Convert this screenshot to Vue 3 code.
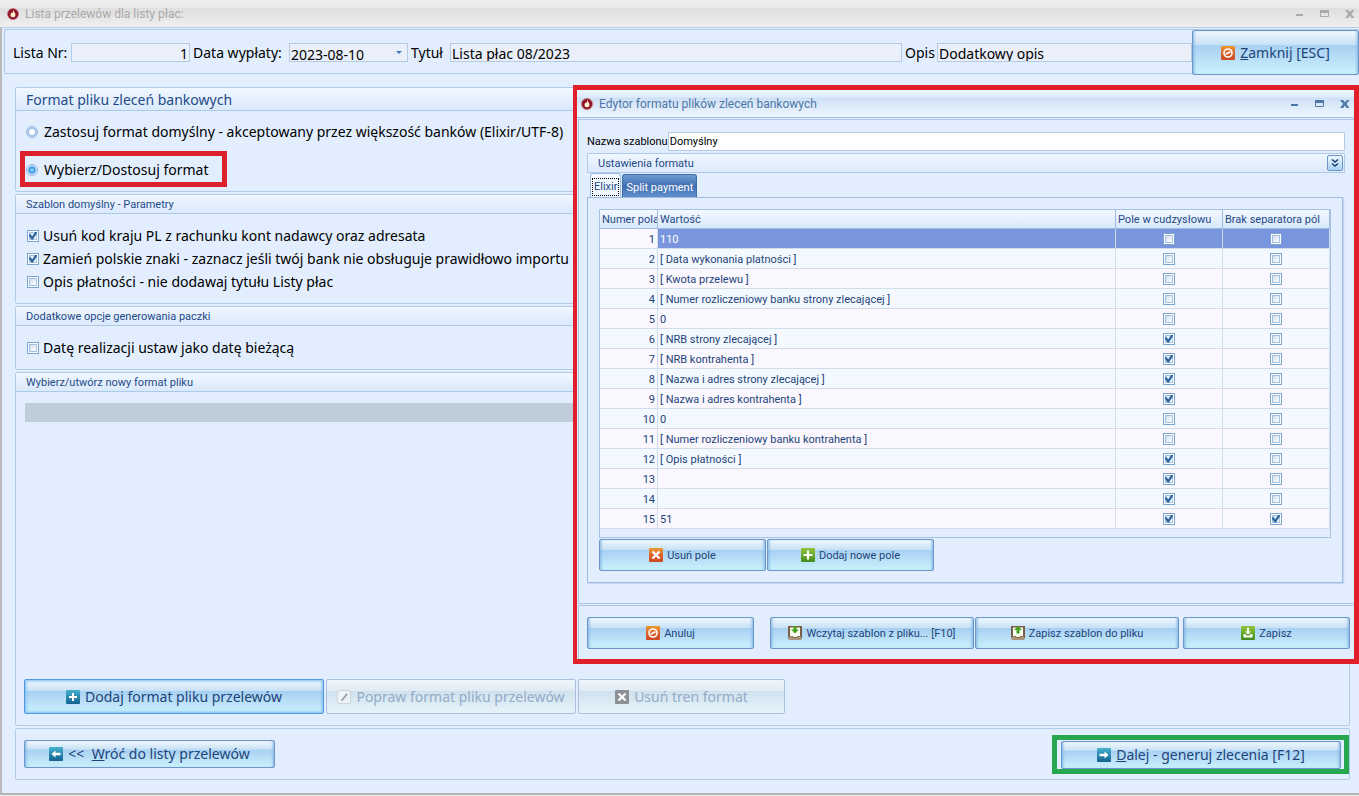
<script setup>
import { ref, reactive } from 'vue'

const rows = reactive([
  { value: '110', quoted: false, noSep: false },
  { value: '[ Data wykonania platności ]', quoted: false, noSep: false },
  { value: '[ Kwota przelewu ]', quoted: false, noSep: false },
  { value: '[ Numer rozliczeniowy banku strony zlecającej ]', quoted: false, noSep: false },
  { value: '0', quoted: false, noSep: false },
  { value: '[ NRB strony zlecającej ]', quoted: true, noSep: false },
  { value: '[ NRB kontrahenta ]', quoted: true, noSep: false },
  { value: '[ Nazwa i adres strony zlecającej ]', quoted: true, noSep: false },
  { value: '[ Nazwa i adres kontrahenta ]', quoted: true, noSep: false },
  { value: '0', quoted: false, noSep: false },
  { value: '[ Numer rozliczeniowy banku kontrahenta ]', quoted: false, noSep: false },
  { value: '[ Opis płatności ]', quoted: true, noSep: false },
  { value: '', quoted: true, noSep: false },
  { value: '', quoted: true, noSep: false },
  { value: '51', quoted: true, noSep: true },
])
const selected = ref(0)
const mode = ref('custom')
const stripCountry = ref(true)
const replaceChars = ref(true)
const skipTitle = ref(false)
const currentDate = ref(false)
const templateName = ref('Domyślny')
</script>

<template>
  <div class="window">
    <svg class="defs" aria-hidden="true">
      <defs>
        <linearGradient id="g-orange" x1="0" y1="0" x2="0" y2="1"><stop offset="0" stop-color="#eb9a2c" /><stop offset="0.5" stop-color="#e0622e" /><stop offset="1" stop-color="#c94a22" /></linearGradient>
        <linearGradient id="g-green" x1="0" y1="0" x2="0" y2="1"><stop offset="0" stop-color="#94c63e" /><stop offset="1" stop-color="#3f8a1c" /></linearGradient>
        <linearGradient id="g-blue" x1="0" y1="0" x2="0" y2="1"><stop offset="0" stop-color="#46b1cf" /><stop offset="1" stop-color="#12638f" /></linearGradient>
        <symbol id="i-flame" viewBox="0 0 12 12">
          <circle cx="6" cy="6" r="5.500" fill="#8f1426" stroke="#c8707a" stroke-width="0.800" />
          <path d="M6.200 2c.3 1.600 2.300 2.600 2.300 4.900A2.400 2.400 0 0 1 6 9.300a2.400 2.400 0 0 1-2.500-2.400c0-1.100.6-1.800 1-2.300l.5 1C5.700 4.600 6.100 3.400 6.200 2z" fill="#fff0d0" />
        </symbol>
        <symbol id="i-cancel" viewBox="0 0 14 14">
          <rect width="14" height="14" rx="1" fill="url(#g-orange)" />
          <circle cx="7" cy="7" r="4" fill="none" stroke="#fff" stroke-width="1.600" />
          <path d="M4.500 8.300l5-2.600" stroke="#fff" stroke-width="1.600" />
        </symbol>
        <symbol id="i-cross" viewBox="0 0 14 14">
          <rect width="14" height="14" rx="1" fill="url(#g-orange)" />
          <path d="M3.500 3.500l7 7M10.500 3.500l-7 7" stroke="#fff" stroke-width="2.400" />
        </symbol>
        <symbol id="i-cross-gray" viewBox="0 0 14 14">
          <rect width="14" height="14" rx="1" fill="#8c9196" />
          <path d="M3.500 3.500l7 7M10.500 3.500l-7 7" stroke="#fff" stroke-width="2.200" />
        </symbol>
        <symbol id="i-plus-green" viewBox="0 0 14 14">
          <rect width="14" height="14" rx="1" fill="url(#g-green)" />
          <path d="M7 2.500v9M2.500 7h9" stroke="#fff" stroke-width="2.200" />
        </symbol>
        <symbol id="i-plus-blue" viewBox="0 0 14 14">
          <rect width="14" height="14" rx="1" fill="url(#g-blue)" />
          <path d="M7 3v8M3 7h8" stroke="#fff" stroke-width="2" />
        </symbol>
        <symbol id="i-left" viewBox="0 0 14 14">
          <rect width="14" height="14" rx="1" fill="url(#g-blue)" />
          <path d="M2.500 7l4-3.500v2.300h5v2.400h-5v2.300z" fill="#fff" />
        </symbol>
        <symbol id="i-right" viewBox="0 0 14 14">
          <rect width="14" height="14" rx="1" fill="url(#g-blue)" />
          <path d="M11.500 7l-4-3.500v2.300h-5v2.400h5v2.300z" fill="#fff" />
        </symbol>
        <symbol id="i-save" viewBox="0 0 14 14">
          <rect width="14" height="14" rx="1" fill="url(#g-green)" />
          <path d="M6 2h2v3.500h2L7 8.500l-3-3h2zM2.500 8h1.800c.4 1.300 1.300 1.700 2.700 1.700s2.300-.4 2.700-1.700h1.800v3.500h-9z" fill="#fff" />
        </symbol>
        <symbol id="i-tray-in" viewBox="0 0 14 14">
          <path d="M0 0h14v11l-1 3H1l-1-3z" fill="#7a5f45" />
          <path d="M2 1.500h10V10H9.500l-1 1h-3l-1-1H2z" fill="#f6fbf0" />
          <path d="M1 10.500h3l1 1.300h4l1-1.300h3V14H1z" fill="#a9957c" />
          <path d="M5.500 0h3v3.500H11L7 7.500l-4-4h2.500z" fill="#48a01f" />
        </symbol>
        <symbol id="i-tray-out" viewBox="0 0 14 14">
          <path d="M0 0h14v11l-1 3H1l-1-3z" fill="#7a5f45" />
          <path d="M2 1.500h10V10H9.500l-1 1h-3l-1-1H2z" fill="#f6fbf0" />
          <path d="M1 10.500h3l1 1.300h4l1-1.300h3V14H1z" fill="#a9957c" />
          <path d="M5.500 7.500h3V4H11L7 0 3 4h2.500z" fill="#48a01f" />
        </symbol>
        <symbol id="i-edit" viewBox="0 0 14 14">
          <rect x="0.500" y="0.500" width="13" height="13" rx="1.500" fill="#eef3f5" stroke="#cdd6db" />
          <path d="M4 11l.6-1.800L9.500 3.300l1.300 1.200L5.900 10.400z" fill="#98a2a8" />
        </symbol>
        <symbol id="i-min" viewBox="0 0 10 10"><path d="M1 6h7" stroke="currentColor" stroke-width="2" /></symbol>
        <symbol id="i-max" viewBox="0 0 10 10"><path d="M0 2.500h9" stroke="currentColor" stroke-width="3" /><path d="M.5 3v4.500h8V3" fill="none" stroke="currentColor" /></symbol>
        <symbol id="i-close" viewBox="0 0 10 10"><path d="M0 1h3.200L5 3.500 6.800 1H9.500L6.500 5l3 4H6.600L5 6.600 3.200 9H0l3.200-4z" fill="currentColor" /></symbol>
      </defs>
    </svg>

    <header class="titlebar inactive">
      <svg class="logo"><use href="#i-flame" /></svg>
      <h1>Lista przelewów dla listy płac:</h1>
      <div class="controls">
        <button aria-label="Minimalizuj"><svg><use href="#i-min" /></svg></button>
        <button aria-label="Maksymalizuj"><svg><use href="#i-max" /></svg></button>
        <button aria-label="Zamknij okno"><svg><use href="#i-close" /></svg></button>
      </div>
    </header>

    <main class="frame">
      <section class="top">
        <label for="nr">Lista Nr:</label>
        <input id="nr" class="field right" value="1" readonly />
        <label for="date">Data wypłaty:</label>
        <div class="date">
          <select id="date" class="field"><option>2023-08-10</option></select>
        </div>
        <label for="ttl">Tytuł</label>
        <input id="ttl" class="field" value="Lista płac 08/2023" readonly />
        <label for="desc">Opis</label>
        <input id="desc" class="field" value="Dodatkowy opis" readonly />
        <button class="btn large close"><svg><use href="#i-cancel" /></svg><span><u>Z</u>amknij [ESC]</span></button>
      </section>

      <div class="content">
        <section class="group format">
          <h2>Format pliku zleceń bankowych</h2>
          <div class="radios">
            <label class="radio"><input v-model="mode" type="radio" name="mode" value="default" />Zastosuj format domyślny - akceptowany przez większość banków (Elixir/UTF-8)</label>
            <label class="radio marked"><input v-model="mode" type="radio" name="mode" value="custom" />Wybierz/Dostosuj format</label>
          </div>
        </section>

        <section class="group">
          <h2>Szablon domyślny - Parametry</h2>
          <div class="checks">
            <label><input v-model="stripCountry" type="checkbox" />Usuń kod kraju PL z rachunku kont nadawcy oraz adresata</label>
            <label><input v-model="replaceChars" type="checkbox" />Zamień polskie znaki - zaznacz jeśli twój bank nie obsługuje prawidłowo importu po</label>
            <label><input v-model="skipTitle" type="checkbox" />Opis płatności - nie dodawaj tytułu Listy płac</label>
          </div>
        </section>

        <section class="group">
          <h2>Dodatkowe opcje generowania paczki</h2>
          <div class="checks">
            <label><input v-model="currentDate" type="checkbox" />Datę realizacji ustaw jako datę bieżącą</label>
          </div>
        </section>

        <section class="group grow">
          <h2>Wybierz/utwórz nowy format pliku</h2>
          <div class="picker">
            <div class="strip"></div>
            <div class="actions">
              <button class="btn large add"><svg><use href="#i-plus-blue" /></svg><span>Dodaj format pliku przelewów</span></button>
              <button class="btn large edit" disabled><svg><use href="#i-edit" /></svg><span>Popraw format pliku przelewów</span></button>
              <button class="btn large remove" disabled><svg><use href="#i-cross-gray" /></svg><span>Usuń tren format</span></button>
            </div>
          </div>
        </section>

        <footer class="group nav">
          <button class="btn large back"><svg><use href="#i-left" /></svg><span>&lt;&lt;&nbsp; <u>W</u>róć do listy przelewów</span></button>
          <div class="next-mark">
            <button class="btn large next"><svg><use href="#i-right" /></svg><span><u>D</u>alej - generuj zlecenia [F12]</span></button>
          </div>
        </footer>
      </div>
    </main>

    <section class="dialog" role="dialog" aria-labelledby="dlg">
      <header class="titlebar">
        <svg class="logo"><use href="#i-flame" /></svg>
        <h1 id="dlg">Edytor formatu plików zleceń bankowych</h1>
        <div class="controls">
          <button aria-label="Minimalizuj edytor"><svg><use href="#i-min" /></svg></button>
          <button aria-label="Maksymalizuj edytor"><svg><use href="#i-max" /></svg></button>
          <button aria-label="Zamknij edytor"><svg><use href="#i-close" /></svg></button>
        </div>
      </header>

      <div class="editor">
        <div class="name">
          <label for="tpl">Nazwa szablonu</label>
          <input id="tpl" v-model="templateName" />
        </div>
        <div class="settings">
          <h2>Ustawienia formatu</h2>
          <button aria-label="Rozwiń ustawienia">
            <svg viewBox="0 0 8 8"><path d="M1 .5l3 2.500 3-2.500M1 4.500l3 2.500 3-2.500" fill="none" stroke="#1f4277" stroke-width="1.500" /></svg>
          </button>
        </div>
        <div class="tabs" role="tablist">
          <button class="tab active" role="tab" aria-selected="true"><span>Elixir</span></button>
          <button class="tab" role="tab" aria-selected="false"><span>Split payment</span></button>
        </div>
        <div class="tabpanel" role="tabpanel">
          <div class="grid">
            <table>
              <colgroup><col class="c-num" /><col /><col class="c-flag" /><col class="c-flag" /></colgroup>
              <thead>
                <tr><th>Numer pola</th><th>Wartość</th><th>Pole w cudzysłowu</th><th>Brak separatora pól</th></tr>
              </thead>
              <tbody>
                <tr v-for="(row, i) in rows" :key="i" :class="{ selected: i === selected }" @click="selected = i">
                  <td class="num">{{ i + 1 }}</td>
                  <td>{{ row.value }}</td>
                  <td class="flag"><input v-model="row.quoted" type="checkbox" :aria-label="'Pole w cudzysłowu ' + (i + 1)" /></td>
                  <td class="flag"><input v-model="row.noSep" type="checkbox" :aria-label="'Brak separatora pól ' + (i + 1)" /></td>
                </tr>
              </tbody>
            </table>
          </div>
          <div class="rowactions">
            <button class="btn"><svg><use href="#i-cross" /></svg><span>Usuń pole</span></button>
            <button class="btn"><svg><use href="#i-plus-green" /></svg><span>Dodaj nowe pole</span></button>
          </div>
        </div>
      </div>

      <footer class="dlgactions">
        <button class="btn cancel"><svg><use href="#i-cancel" /></svg><span>Anuluj</span></button>
        <button class="btn wide"><svg><use href="#i-tray-in" /></svg><span>Wczytaj szablon z pliku... [F10]</span></button>
        <button class="btn wide"><svg><use href="#i-tray-out" /></svg><span>Zapisz szablon do pliku</span></button>
        <button class="btn save"><svg><use href="#i-save" /></svg><span>Zapisz</span></button>
      </footer>
    </section>
  </div>
</template>

<style>
body {
  background: #f1f0ee;
}
</style>

<style scoped>
* {
  box-sizing: border-box;
}
.window {
  position: relative;
  display: flex;
  flex-direction: column;
  min-height: 100vh;
  padding-bottom: 1px;
  overflow: hidden;
  background: #f1f0ee;
  color: #000;
  font: 14px/20px "Noto Sans", "Open Sans", sans-serif;
}
.defs {
  position: absolute;
  width: 0;
  height: 0;
}
button,
input,
select {
  margin: 0;
  font: inherit;
  color: inherit;
}
h1,
h2 {
  margin: 0;
  font-weight: normal;
}
.titlebar {
  display: flex;
  align-items: center;
  height: 27px;
  padding: 0 4px;
  background: linear-gradient(#f1f7fe, #dfecfb 25%, #cfe1f6 30%, #eef6fe);
  border-bottom: 1px solid #9fbde0;
  color: #4d77a8;
}
.titlebar h1 {
  flex: 1;
  margin-left: 6px;
  font: 12px/16px Roboto, "Noto Sans", sans-serif;
}
.titlebar.inactive {
  padding-left: 7px;
  background: linear-gradient(#f0f0f0, #e9e9e9 28%, #dfdfdf 32%, #efefef);
  border-bottom: 0;
  color: #a9a9a9;
}
.logo {
  width: 12px;
  height: 12px;
}
.controls {
  display: flex;
  gap: 15px;
}
.controls button {
  width: 10px;
  height: 10px;
  padding: 0;
  border: 0;
  background: none;
}
.controls svg {
  display: block;
  width: 10px;
  height: 10px;
}
.frame {
  flex: 1;
  display: flex;
  flex-direction: column;
  padding: 1px 0 13px 1px;
  background: #e2eefe;
  border-left: 2px solid #b9b9b9;
  border-top: 1px solid #b3d0e9;
  border-bottom: 2px solid #b4b4b4;
}
.top {
  display: grid;
  grid-template-columns: 58px 119px 99px 119px 42px minmax(0, 452fr) 35px minmax(0, 255fr) 167px;
  align-items: center;
  height: 45px;
  margin-left: 1px;
  padding-left: 8px;
  border: 1px solid #afcbe8;
  border-right: 0;
  border-radius: 2px;
}
.top label {
  padding-left: 3px;
  white-space: nowrap;
}
.top label:first-child {
  padding-left: 0;
}
.field {
  width: 100%;
  height: 19px;
  padding: 3px 1px 0;
  border: 1px solid #b3cbe5;
  border-radius: 0;
  outline: 0;
  background: #ebeff9;
  line-height: 20px;
  appearance: none;
}
.date .field {
  padding-top: 1px;
}
.right {
  text-align: right;
}
.date {
  display: flex;
  position: relative;
}
.date::after {
  content: "";
  position: absolute;
  right: 6px;
  top: 8px;
  border: 3px solid transparent;
  border-top-color: #3f78b5;
  border-bottom: 0;
}
.btn {
  display: flex;
  align-items: center;
  justify-content: center;
  gap: 4px;
  width: 167px;
  height: 32px;
  padding: 0 4px;
  border: 1px solid #6a96c8;
  border-radius: 2px;
  background: linear-gradient(#f0f8fe, #c9e1f5 32%, #a6d1f3 34%, #b4daf6 55%, #c9f1fb);
  box-shadow: inset 3px 0 3px -2px #7fb2e3, inset -3px 0 3px -2px #7fb2e3;
  color: #1e4479;
  font-size: 11px;
  white-space: nowrap;
}
.btn svg {
  flex: none;
  width: 14px;
  height: 14px;
}
.btn span {
  padding-top: 2px;
}
.btn.large {
  gap: 5px;
  font-size: 14px;
}
.btn.large span {
  padding-top: 0;
}
.btn:disabled {
  border-color: #a9c1dc;
  background: linear-gradient(#eff6fb, #e0ebf4 32%, #d0e2ef 34%, #e6f3f9);
  box-shadow: none;
  color: #94abc8;
}
.btn.close {
  width: 100%;
  height: 45px;
}
.content {
  flex: 1;
  display: flex;
  flex-direction: column;
  gap: 2px;
  padding: 13px 9px 0 12px;
}
.group {
  border: 1px solid #b0cbe8;
  border-radius: 2px;
}
.group h2 {
  height: 19px;
  padding-left: 10px;
  border-bottom: 1px solid #a9cae9;
  background: linear-gradient(#f0f7ff, #dbe9fb);
  color: #1f4a88;
  font: 11px/19px Roboto, "Noto Sans", sans-serif;
}
.group.format h2 {
  height: 23px;
  font: 14px/24px "Noto Sans", "Open Sans", sans-serif;
}
.radios {
  padding: 0 4px 4px;
}
.radio {
  display: flex;
  align-items: center;
  gap: 6px;
  height: 40px;
  padding: 2px 0 0 6px;
}
.radio.marked {
  width: 207px;
  height: 36px;
  padding-left: 1px;
  border: 5px solid #dc202c;
  white-space: nowrap;
}
input[type="radio"] {
  flex: none;
  appearance: none;
  width: 12px;
  height: 12px;
  border: 1px solid #8fb2dc;
  border-radius: 50%;
  background: radial-gradient(#fff 2px, #d5e5f8 3px, #8fb2dc 4px, #e8f2fd 5px);
}
input[type="radio"]:checked {
  background: radial-gradient(#7fd0fb 1px, #3290dc 3px, #b5d6f5 4px, #e8f2fd 5px);
}
input[type="checkbox"] {
  flex: none;
  appearance: none;
  position: relative;
  width: 12px;
  height: 12px;
  border: 1px solid #7ba4cf;
  background: linear-gradient(135deg, #cfdeee, #fff) 2px 2px / 6px 6px no-repeat #f5f9fe;
  box-shadow: inset 0 0 0 1px #fff, inset 0 0 0 2px #a5c1df;
}
input[type="checkbox"]:checked::after {
  content: "";
  position: absolute;
  left: 1px;
  top: 1px;
  width: 8px;
  height: 8px;
  background: #2d659f;
  clip-path: polygon(0 35%, 20% 35%, 40% 62%, 80% 0, 100% 0, 100% 18%, 50% 100%, 32% 100%, 0 55%);
}
.checks {
  padding: 10px 11px;
}
.checks label {
  display: flex;
  align-items: center;
  gap: 4px;
  height: 23px;
  white-space: nowrap;
}
.grow {
  flex: 1;
  display: flex;
  flex-direction: column;
}
.picker {
  flex: 1;
  display: flex;
  flex-direction: column;
  justify-content: space-between;
  padding: 11px 8px;
}
.strip {
  height: 19px;
  margin-left: 1px;
  background: #bfccda;
}
.actions {
  display: flex;
  gap: 2px;
}
.actions .btn {
  height: 35px;
}
.btn.add {
  width: 300px;
  border-color: #5398dd;
  box-shadow: inset 0 0 3px 1px #79bdf1;
}
.btn.edit {
  width: 250px;
}
.btn.remove {
  width: 207px;
}
.nav {
  display: flex;
  align-items: center;
  justify-content: space-between;
  height: 52px;
  padding-left: 8px;
}
.nav .btn {
  height: 28px;
}
.btn.back {
  width: 251px;
}
.next-mark {
  height: 39px;
  padding: 1px 3px 0 4px;
  border: 5px solid #27a74f;
}
.btn.next {
  width: 280px;
}
.dialog {
  position: absolute;
  top: 85px;
  left: 573px;
  right: 0;
  border: 5px solid #e01f2b;
  border-left-width: 4px;
  background: #e2eefe;
  font: 11px/16px Roboto, "Noto Sans", sans-serif;
}
.dialog .titlebar {
  height: 28px;
}
.editor {
  margin: 1px 0 1px 1px;
  padding: 12px 9px 20px 8px;
  border: 1px solid #a9c6e6;
  border-right: 0;
}
.name {
  display: flex;
  align-items: center;
}
.name input {
  flex: 1;
  height: 19px;
  padding: 0 1px;
  border: 1px solid #b3cbe5;
  background: #fff;
}
.settings {
  display: flex;
  align-items: center;
  justify-content: space-between;
  height: 20px;
  margin-top: 2px;
  padding: 0 1px 0 10px;
  border: 1px solid #b0cbe8;
  background: linear-gradient(#f0f7ff, #dbe9fb);
  color: #1f4a88;
}
.settings h2 {
  padding-top: 2px;
  font-size: 11px;
}
.settings button {
  width: 16px;
  height: 16px;
  padding: 3px;
  border: 1px solid #6a96c8;
  border-radius: 2px;
  background: linear-gradient(#eef7fe, #a9d2f3);
}
.settings svg {
  display: block;
  width: 8px;
  height: 8px;
}
.tabs {
  display: flex;
  align-items: flex-end;
  gap: 1px;
  height: 24px;
  padding-left: 3px;
}
.tab {
  height: 23px;
  padding: 3px 3px 0;
  border: 1px solid #3e6dab;
  border-bottom: 0;
  border-radius: 3px 3px 0 0;
  background: linear-gradient(#6f9ad0, #426fb2 50%, #5f90cd);
  color: #fff;
}
.tab.active {
  height: 24px;
  padding: 2px 1px 0;
  border-color: #9dbce0;
  background: #f2f8ff;
  color: #1f4a88;
}
.tab.active span {
  display: block;
  padding: 0 1px;
  border: 1px dotted #000;
}
.tabpanel {
  margin-right: 2px;
  padding: 11px;
  border: 1px solid #9dbce0;
  box-shadow: 1px 1px 1px #c4d7ee;
}
.grid {
  padding-bottom: 8px;
  border: 1px solid #a8c1e0;
  color: #1e4479;
}
table {
  width: 100%;
  table-layout: fixed;
  border-collapse: separate;
  border-spacing: 0;
}
.c-num {
  width: 58px;
}
.c-flag {
  width: 107px;
}
th,
td {
  height: 20px;
  padding: 2px 2px 0;
  overflow: hidden;
  border-right: 1px solid #cfdeea;
  border-bottom: 1px solid #cfdeea;
  font-weight: normal;
  line-height: 16px;
  text-align: left;
  white-space: nowrap;
}
th {
  height: 19px;
  padding: 2px 1px 0 2px;
  border-color: #9dbce0;
  background: linear-gradient(#f2f8ff, #d9e8fb);
  color: #1f4a88;
}
tbody tr {
  background: #f3f9ff;
}
tbody tr:nth-child(odd) {
  background: #fbf7fe;
}
.selected td {
  background: #7995dd;
  color: #fff;
}
td.num {
  text-align: right;
}
.selected td.num {
  background: #fbf7fe;
  color: #1e4479;
}
td.flag {
  padding-top: 0;
  text-align: center;
}
td.flag input {
  display: block;
  margin: 0 auto;
}
.rowactions {
  display: flex;
  gap: 1px;
  margin-top: 1px;
}
.dlgactions {
  display: flex;
  gap: 1px;
  margin-left: 1px;
  padding: 11px 4px 10px 8px;
  border: 1px solid #a9c6e6;
  border-right: 0;
  border-bottom: 0;
}
.btn.cancel {
  margin-right: auto;
}
.btn.wide {
  width: 204px;
}
.btn.save {
  margin-left: 3px;
}
</style>
